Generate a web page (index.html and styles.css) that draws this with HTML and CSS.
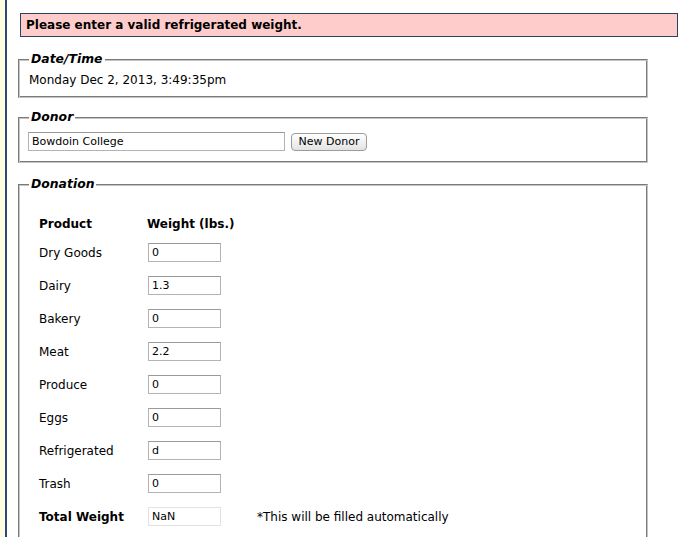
FILE: index.html
```html
<!DOCTYPE html>
<html>
<head>
<meta charset="utf-8">
<link rel="stylesheet" href="styles.css">
</head>
<body>
<div class="page">
  <div class="error">Please enter a valid refrigerated weight.</div>

  <fieldset class="box box-date">
    <legend>Date/Time</legend>
    <div class="datetime">Monday Dec 2, 2013, 3:49:35pm</div>
  </fieldset>

  <fieldset class="box box-donor">
    <legend>Donor</legend>
    <div class="donor-row">
      <input class="donor-input" type="text" value="Bowdoin College">
      <button class="btn" type="button">New Donor</button>
    </div>
  </fieldset>

  <fieldset class="box box-donation">
    <legend>Donation</legend>
    <table class="items">
      <tr class="head"><th class="c1">Product</th><th class="c2">Weight (lbs.)</th><th></th></tr>
      <tr><td class="c1">Dry Goods</td><td class="c2"><input class="w" type="text" value="0"></td><td></td></tr>
      <tr><td class="c1">Dairy</td><td class="c2"><input class="w" type="text" value="1.3"></td><td></td></tr>
      <tr><td class="c1">Bakery</td><td class="c2"><input class="w" type="text" value="0"></td><td></td></tr>
      <tr><td class="c1">Meat</td><td class="c2"><input class="w" type="text" value="2.2"></td><td></td></tr>
      <tr><td class="c1">Produce</td><td class="c2"><input class="w" type="text" value="0"></td><td></td></tr>
      <tr><td class="c1">Eggs</td><td class="c2"><input class="w" type="text" value="0"></td><td></td></tr>
      <tr><td class="c1">Refrigerated</td><td class="c2"><input class="w" type="text" value="d"></td><td></td></tr>
      <tr><td class="c1">Trash</td><td class="c2"><input class="w" type="text" value="0"></td><td></td></tr>
      <tr><th class="c1">Total Weight</th><td class="c2"><input class="w total" type="text" value="NaN" readonly></td><td class="note">*This will be filled automatically</td></tr>
    </table>
  </fieldset>
</div>
</body>
</html>
```

FILE: styles.css
```css
html, body {
  margin: 0;
  padding: 0;
}
body {
  background: #fffbe2;
  font-family: "DejaVu Sans", Verdana, sans-serif;
  font-size: 12px;
  color: #000;
}
.page {
  margin-left: 5px;
  border-left: 2px solid #2c4874;
  background: #fff;
  min-height: 700px;
  padding: 13px 12px 0 11px;
}
.error {
  margin-left: 2px;
  height: 22px;
  line-height: 22px;
  border: 1px solid #2f4162;
  background: #ffcccc;
  font-weight: bold;
  padding-left: 5px;
}
.box {
  margin: 0;
  width: 630px;
  box-sizing: border-box;
  border-width: 1px;
  border-style: solid;
  border-color: #7a7a7a #c4c4c4 #c4c4c4 #7a7a7a;
  box-shadow: inset 1px 1px 0 #c4c4c4, inset -1px -1px 0 #7a7a7a;
  padding: 0 9px;
}
.box legend {
  font-weight: bold;
  font-style: italic;
  font-size: 12.4px;
  padding: 0 2px;
  margin-left: 1px;
  background: #fff;
  line-height: 16px;
}
.box-date {
  margin-top: 14px;
  padding-top: 5px;
  padding-bottom: 9px;
}
.datetime {
  line-height: 16px;
  padding-left: 1px;
}
.box-donor {
  margin-top: 11px;
  padding-top: 7px;
  padding-bottom: 11px;
}
.donor-row {
  display: flex;
  align-items: center;
  gap: 6px;
}
.donor-input {
  width: 257px;
  height: 19px;
  box-sizing: border-box;
  border: 1px solid #b4b4b4;
  border-top-color: #9a9a9a;
  font-family: "DejaVu Sans", Verdana, sans-serif;
  font-size: 11px;
  padding: 0 3px;
  margin: 0;
  color: #000;
}
.btn {
  height: 18px;
  width: 76px;
  box-sizing: border-box;
  border: 1px solid #9c9c9c;
  border-radius: 4px;
  background: linear-gradient(#ffffff, #f1f1f1 50%, #e3e3e3);
  font-family: "DejaVu Sans", Verdana, sans-serif;
  font-size: 11px;
  padding: 0;
  margin: 0;
  color: #000;
}
.box-donation {
  margin-top: 13px;
  padding-top: 19px;
  min-height: 500px;
}
.items {
  border-collapse: collapse;
  margin-left: 11px;
}
.items th, .items td {
  padding: 0;
  height: 33px;
  text-align: left;
  vertical-align: middle;
}
.items .head th {
  height: 25px;
}
.items .c1 {
  width: 108px;
}
.items .c2 {
  width: 110px;
}
.w {
  display: block;
  width: 73px;
  height: 19px;
  box-sizing: border-box;
  border: 1px solid #b4b4b4;
  border-top-color: #9a9a9a;
  font-family: "DejaVu Sans", Verdana, sans-serif;
  font-size: 11px;
  padding: 0 3px;
  margin: 0 0 0 1px;
  color: #000;
}
.w.total {
  border-color: #e2e2e2;
}
.note {
  white-space: nowrap;
}
```
